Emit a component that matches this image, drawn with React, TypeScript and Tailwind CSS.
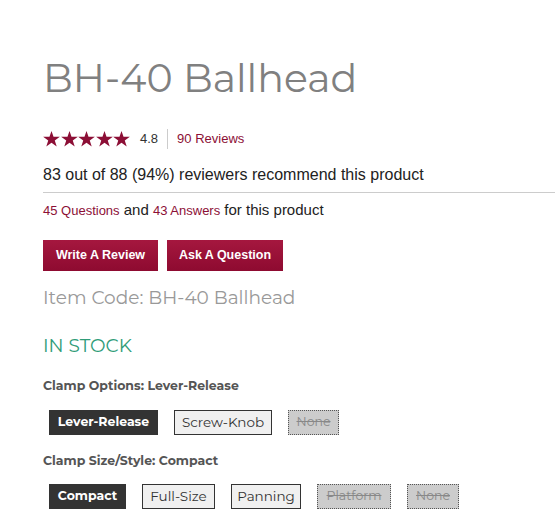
import React from "react";

const gotham = { fontFamily: '"Montserrat", "Open Sans", "Noto Sans", sans-serif' };

const Star = () => (
  <svg width="17" height="16" viewBox="0 0 24 23" className="fill-[#8c0f36]">
    <path d="M12 0l2.9 8.3H24l-7.3 5.3 2.8 8.7L12 17l-7.5 5.3 2.8-8.7L0 8.3h9.1z" />
  </svg>
);

type OptionProps = { label: string; state: "on" | "off" | "na"; w: string };

const Option = ({ label, state, w }: OptionProps) => {
  if (state === "on")
    return (
      <span className={`${w} h-[25px] flex items-center justify-center whitespace-nowrap bg-[#333] text-white text-[12.5px] font-bold border border-[#333]`}>
        {label}
      </span>
    );
  if (state === "na")
    return (
      <span className={`${w} h-[25px] flex items-center justify-center whitespace-nowrap bg-[#ccc] text-[#888] text-[12.5px] line-through border border-dotted border-[#555]`}>
        {label}
      </span>
    );
  return (
    <span className={`${w} h-[25px] flex items-center justify-center whitespace-nowrap bg-[#f0f0f0] text-[#333] text-[13.5px] border border-[#333]`}>
      {label}
    </span>
  );
};

export default function App() {
  return (
    <div className="w-[555px] h-[522px] bg-white overflow-hidden pl-[43px] pt-[52px]" style={{ fontFamily: '"Liberation Sans", Arial, sans-serif' }}>
      <h1 className="text-[39.5px] leading-[52px] text-[#808080]" style={gotham}>BH-40 Ballhead</h1>

      <div className="flex items-center mt-[24px] h-[22px]">
        <div className="flex gap-[0.5px]">
          <Star /><Star /><Star /><Star /><Star />
        </div>
        <span className="ml-[10px] text-[13px] text-[#333]">4.8</span>
        <span className="mx-[9px] w-px h-[20px] bg-[#ccc]" />
        <span className="text-[13px] text-[#8c0f36]">90 Reviews</span>
      </div>

      <p className="mt-[15px] text-[16px] leading-[20px] text-[#222]">83 out of 88 (94%) reviewers recommend this product</p>
      <div className="mt-[7px] h-px bg-[#ccc]" />

      <p className="mt-[7px] text-[15px] leading-[20px] text-[#222]">
        <span className="text-[13px] text-[#8c0f36]">45 Questions</span> and{" "}
        <span className="text-[13px] text-[#8c0f36]">43 Answers</span> for this product
      </p>

      <div className="flex gap-[9px] mt-[19px]">
        <button className="w-[115px] h-[31px] text-white text-[12.5px] font-bold bg-gradient-to-b from-[#a5173f] to-[#8e0a30]">
          Write A Review
        </button>
        <button className="w-[116px] h-[31px] text-white text-[12.5px] font-bold bg-gradient-to-b from-[#a5173f] to-[#8e0a30]">
          Ask A Question
        </button>
      </div>

      <p className="mt-[14px] text-[18.5px] leading-[26px] text-[#999]" style={gotham}>Item Code: BH-40 Ballhead</p>

      <p className="mt-[22px] text-[18.5px] leading-[26px] text-[#2f9c78]" style={gotham}>IN STOCK</p>

      <p className="mt-[18px] text-[12.5px] leading-[18px] font-bold text-[#555]" style={gotham}>Clamp Options: Lever-Release</p>
      <div className="flex gap-[16px] mt-[15px] ml-[6px]" style={gotham}>
        <Option label="Lever-Release" state="on" w="w-[109px]" />
        <Option label="Screw-Knob" state="off" w="w-[98px]" />
        <Option label="None" state="na" w="w-[51px]" />
      </div>

      <p className="mt-[17px] text-[12.5px] leading-[18px] font-bold text-[#555]" style={gotham}>Clamp Size/Style: Compact</p>
      <div className="flex gap-[16px] mt-[14px] ml-[6px]" style={gotham}>
        <Option label="Compact" state="on" w="w-[77px]" />
        <Option label="Full-Size" state="off" w="w-[73px]" />
        <Option label="Panning" state="off" w="w-[70px]" />
        <Option label="Platform" state="na" w="w-[74px]" />
        <Option label="None" state="na" w="w-[52px]" />
      </div>
    </div>
  );
}
